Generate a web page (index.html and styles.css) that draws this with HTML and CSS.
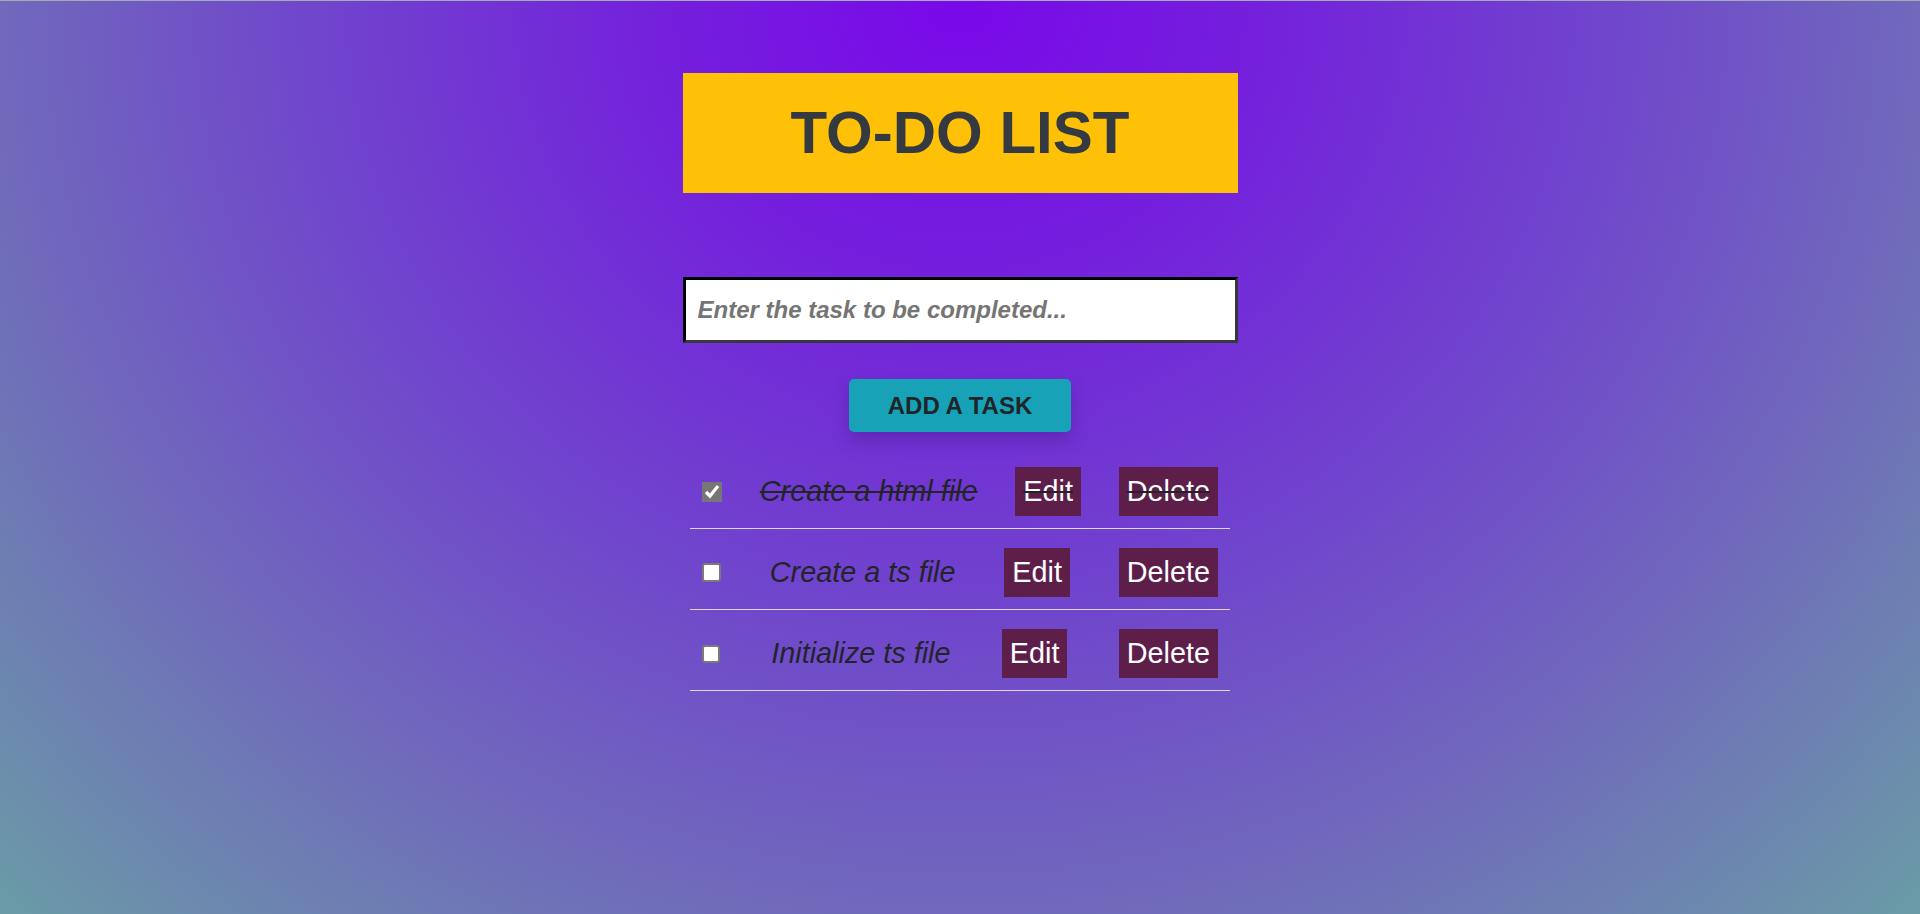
FILE: index.html
```html
<!DOCTYPE html>
<html lang="en">
<head>
<meta charset="utf-8">
<title>To-Do List</title>
<link rel="stylesheet" href="styles.css">
</head>
<body>
  <main class="app">
    <h1 class="title">TO-DO LIST</h1>
    <form class="task-form" onsubmit="return false">
      <input class="task-input" type="text" placeholder="Enter the task to be completed...">
      <div class="add-wrap">
        <button class="add-btn" type="submit">ADD A TASK</button>
      </div>
    </form>
    <ul class="task-list">
      <li class="task done">
        <input class="check" type="checkbox" checked>
        <span class="task-text">Create a html file</span>
        <button class="row-btn" type="button">Edit</button>
        <button class="row-btn" type="button">Delete</button>
      </li>
      <li class="task">
        <input class="check" type="checkbox">
        <span class="task-text">Create a ts file</span>
        <button class="row-btn" type="button">Edit</button>
        <button class="row-btn" type="button">Delete</button>
      </li>
      <li class="task">
        <input class="check" type="checkbox">
        <span class="task-text">Initialize ts file</span>
        <button class="row-btn" type="button">Edit</button>
        <button class="row-btn" type="button">Delete</button>
      </li>
    </ul>
  </main>
</body>
</html>
```

FILE: styles.css
```css
* {
  box-sizing: border-box;
}

html, body {
  margin: 0;
  padding: 0;
}

body {
  min-height: 100vh;
  border-top: 1px solid #a3abb3;
  font-family: "Liberation Sans", Arial, sans-serif;
  background: radial-gradient(ellipse farthest-corner at 50% 0%,
    #7a08ea 0%,
    #7420dc 22%,
    #7046cc 48%,
    #7068bc 70%,
    #6a9ca6 100%);
}

.app {
  width: 555px;
  margin: 0 auto;
  padding-top: 72px;
}

.title {
  margin: 0;
  padding: 25px 0;
  line-height: 70px;
  font-size: 60px;
  font-weight: 700;
  text-align: center;
  color: #343a40;
  background: #ffc107;
}

.task-form {
  margin-top: 84px;
}

.task-input {
  display: block;
  width: 100%;
  height: 66px;
  margin: 0;
  padding: 0 12px;
  border: 3px solid;
  border-color: #000 #35383d #35383d #000;
  background: #fff;
  font-family: "Liberation Sans", Arial, sans-serif;
  font-size: 24px;
  font-weight: 700;
  font-style: italic;
  color: #333;
  outline: none;
}

.task-input::placeholder {
  color: #757575;
}

.add-wrap {
  display: flex;
  justify-content: center;
  margin-top: 36px;
}

.add-btn {
  width: 222px;
  height: 53px;
  padding: 0;
  border: none;
  border-radius: 5px;
  background: #17a2b8;
  color: #212529;
  font-family: "Liberation Sans", Arial, sans-serif;
  font-size: 24px;
  font-weight: 700;
  box-shadow: 0 8px 16px rgba(60, 20, 120, 0.35);
  cursor: pointer;
}

.task-list {
  width: 540px;
  margin: 16px auto 0;
  padding: 0;
  list-style: none;
}

.task {
  display: flex;
  align-items: center;
  justify-content: space-between;
  padding: 19px 12px 12px;
  border-bottom: 1px solid #dcd8ea;
  color: #212529;
}

.check {
  margin: 0;
  width: 20px;
  height: 20px;
  accent-color: #767676;
}

.check:not(:checked) {
  appearance: none;
  -webkit-appearance: none;
  background: #fff;
  border: 2px solid #7a7a7a;
  border-radius: 3px;
}

.task:nth-child(2) .check {
  width: 19px;
  height: 19px;
}

.task:nth-child(3) .check {
  width: 18px;
  height: 18px;
}

.task-text {
  font-size: 28.8px;
  font-style: italic;
  color: #212529;
}

.row-btn {
  margin: 0;
  padding: 8px;
  border: none;
  border-radius: 0;
  background: #5d1f4a;
  color: #fff;
  font-family: "Liberation Sans", Arial, sans-serif;
  font-size: 28.8px;
  line-height: normal;
  cursor: pointer;
}

.done .task-text,
.done .row-btn {
  text-decoration: line-through;
  text-decoration-color: #212529;
}
```
